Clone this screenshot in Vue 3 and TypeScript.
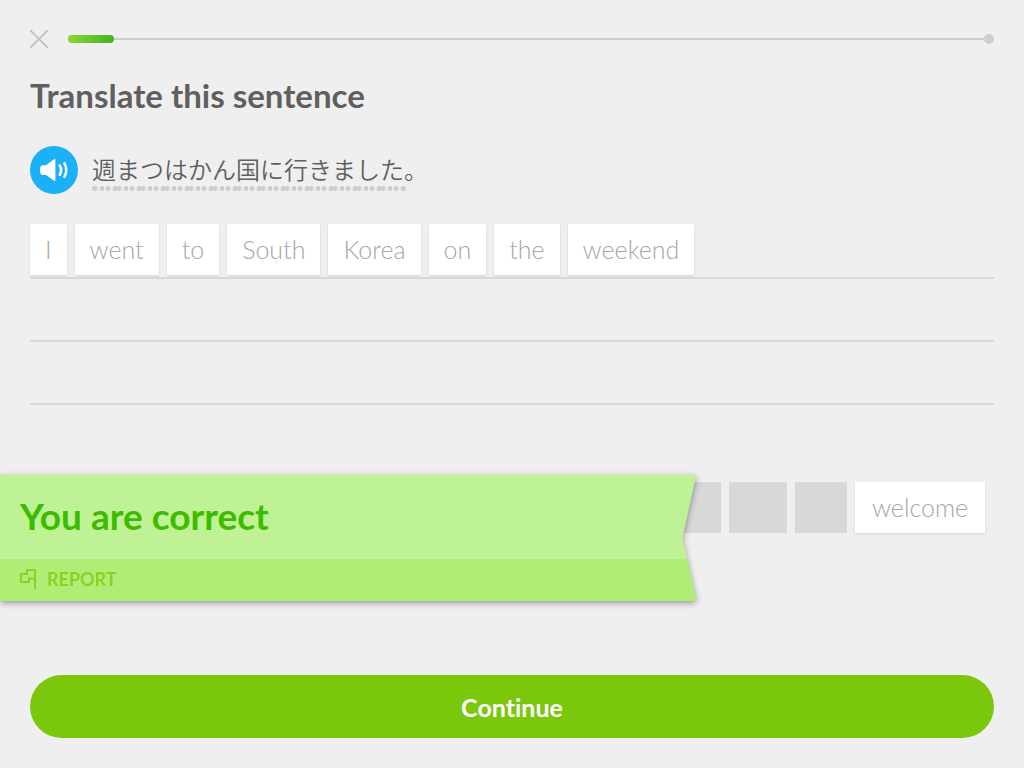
<script setup lang="ts">
import { ref } from 'vue'

interface Slot {
  id: number
  size: string
}

const progress = ref(5)
const answer = ref<string[]>(['I', 'went', 'to', 'South', 'Korea', 'on', 'the', 'weekend'])
const slots: Slot[] = [
  { id: 1, size: 'large' },
  { id: 2, size: 'medium' },
  { id: 3, size: 'small' },
]
</script>

<template>
  <main class="lesson">
    <header class="top">
      <button class="close" type="button" aria-label="Close">
        <svg viewBox="0 0 18 18" width="18" height="18" aria-hidden="true">
          <path d="M0.5 0.5L17.5 17.5M17.5 0.5L0.5 17.5" fill="none" stroke="#bfbfbf" stroke-width="1.7" stroke-linecap="round" />
        </svg>
      </button>
      <div class="track" role="progressbar" aria-label="Lesson" :aria-valuenow="progress" aria-valuemin="0" aria-valuemax="100">
        <div class="fill" :style="{ width: progress + '%' }"></div>
        <div class="line"></div>
        <div class="end"></div>
      </div>
    </header>

    <h1>Translate this sentence</h1>

    <section class="prompt">
      <button class="speaker" type="button" aria-label="Play">
        <svg viewBox="0 0 48 48" width="48" height="48" aria-hidden="true">
          <path d="M12.500 19.200H16L24 13.200Q25.400 12.400 25.400 14V34Q25.400 35.700 24 34.800L16 29H12.500Q10 29 10 24.100Q10 19.200 12.500 19.200Z" fill="#fff" />
          <path d="M29.800 19.600Q32.400 24 29.800 28.800M34.400 17.400Q38.200 24 34.400 30.800" fill="none" stroke="#fff" stroke-width="2.5" stroke-linecap="round" />
        </svg>
      </button>
      <p class="sentence" lang="ja"><span class="hinted">週まつはかん国に行きました</span>。</p>
    </section>

    <section class="answer">
      <div class="row">
        <button v-for="word in answer" :key="word" class="chip" type="button">{{ word }}</button>
      </div>
      <div class="row"></div>
      <div class="row"></div>
    </section>

    <section class="bank">
      <span v-for="slot in slots" :key="slot.id" class="slot" :class="slot.size"></span>
      <button class="chip" type="button">welcome</button>

      <aside class="result" role="status">
        <div class="ribbon">
          <h2>You are correct</h2>
          <button class="report" type="button">
            <svg viewBox="0 0 16 20" width="16" height="20" aria-hidden="true">
              <path d="M15 20V1H7V5H1V13H9V9.500H15" fill="none" stroke="#8bd125" stroke-width="2" />
            </svg>
            REPORT
          </button>
        </div>
      </aside>
    </section>

    <button class="continue" type="button">Continue</button>
  </main>
</template>

<style>
body {
  margin: 0;
  background: #efefef;
}
</style>

<style scoped>
.lesson {
  box-sizing: border-box;
  min-height: 100vh;
  padding: 30px;
  display: flex;
  flex-direction: column;
  background: #efefef;
  color: #5f5f5f;
  font-family: Lato, "Noto Sans CJK JP", sans-serif;
  font-variant-ligatures: none;
  overflow: hidden;
}

button {
  border: 0;
  padding: 0;
  margin: 0;
  background: none;
  font-family: inherit;
  font-variant-ligatures: none;
  cursor: pointer;
}

.top {
  display: flex;
  align-items: center;
  gap: 20px;
  height: 18px;
}

.close {
  width: 18px;
  height: 18px;
}

.close svg,
.speaker svg,
.report svg {
  display: block;
}

.track {
  flex: 1;
  display: flex;
  align-items: center;
}

.fill {
  height: 8px;
  border-radius: 4px;
  background: linear-gradient(110deg, #89d930, #43b225);
}

.line {
  flex: 1;
  height: 2px;
  background: #cecece;
}

.end {
  width: 10px;
  height: 10px;
  border-radius: 50%;
  background: #cecece;
}

h1 {
  margin: 28px 0 0;
  font-size: 33px;
  line-height: 38px;
  font-weight: 700;
}

.prompt {
  display: flex;
  align-items: flex-start;
  gap: 14px;
  margin-top: 32px;
}

.speaker {
  width: 48px;
  height: 48px;
  border-radius: 50%;
  background: #1cb0f6;
}

.sentence {
  margin: 0;
  font-family: "Noto Sans CJK JP", sans-serif;
  font-size: 24px;
  line-height: 46px;
  font-weight: 350;
}

.hinted {
  margin-right: -2px;
  padding-right: 2px;
  padding-bottom: 5px;
  background-image:
    radial-gradient(circle 3px, #cecece 70%, transparent 95%),
    radial-gradient(circle 3px, #cecece 70%, transparent 95%),
    radial-gradient(circle 3px, #cecece 70%, transparent 95%),
    radial-gradient(circle 3px, #cecece 70%, transparent 95%);
  background-size: 24px 5px;
  background-repeat: repeat-x;
  background-position: -9px 100%, -2px 100%, 4px 100%, 11px 100%;
}

.answer {
  margin-top: 22px;
}

.row {
  box-sizing: border-box;
  height: 63px;
  padding-top: 8px;
  display: flex;
  align-items: flex-start;
  gap: 8px;
  border-bottom: 2px solid #d8d8d8;
}

.chip {
  box-sizing: border-box;
  height: 51px;
  padding: 0 15px;
  background: #fff;
  box-shadow: 0 1px 2px rgba(0, 0, 0, 0.12);
  color: #a6a6a6;
  font-size: 25px;
  line-height: 51px;
  font-weight: 300;
}

.bank {
  position: relative;
  display: flex;
  justify-content: flex-end;
  gap: 8px;
  margin-top: 77px;
  padding-right: 9px;
}

.bank .chip {
  min-width: 130px;
}

.slot {
  height: 51px;
  background: #d8d8d8;
}

.slot.large {
  width: 92px;
}

.slot.medium {
  width: 58px;
}

.slot.small {
  width: 52px;
}

.result {
  position: absolute;
  top: -7px;
  left: -30px;
  width: 68vw;
  filter: drop-shadow(0 2px 3px rgba(0, 0, 0, 0.38));
}

.ribbon {
  background: #bff294;
  clip-path: polygon(0 0, 100% 0, 98% 50%, 100% 100%, 0 100%);
}

h2 {
  margin: 0;
  padding: 0 20px 2px;
  font-size: 37px;
  line-height: 82px;
  font-weight: 700;
  color: #3cbc00;
}

.report {
  display: flex;
  align-items: center;
  gap: 11px;
  width: 100%;
  height: 42px;
  padding: 0 20px 2px;
  background: #b0ed75;
  color: #8bd125;
  font-size: 18px;
  font-weight: 700;
}

.continue {
  height: 63px;
  margin-top: auto;
  border-radius: 32px;
  background: #7ac70c;
  color: #fff;
  font-size: 25px;
  font-weight: 700;
}
</style>
